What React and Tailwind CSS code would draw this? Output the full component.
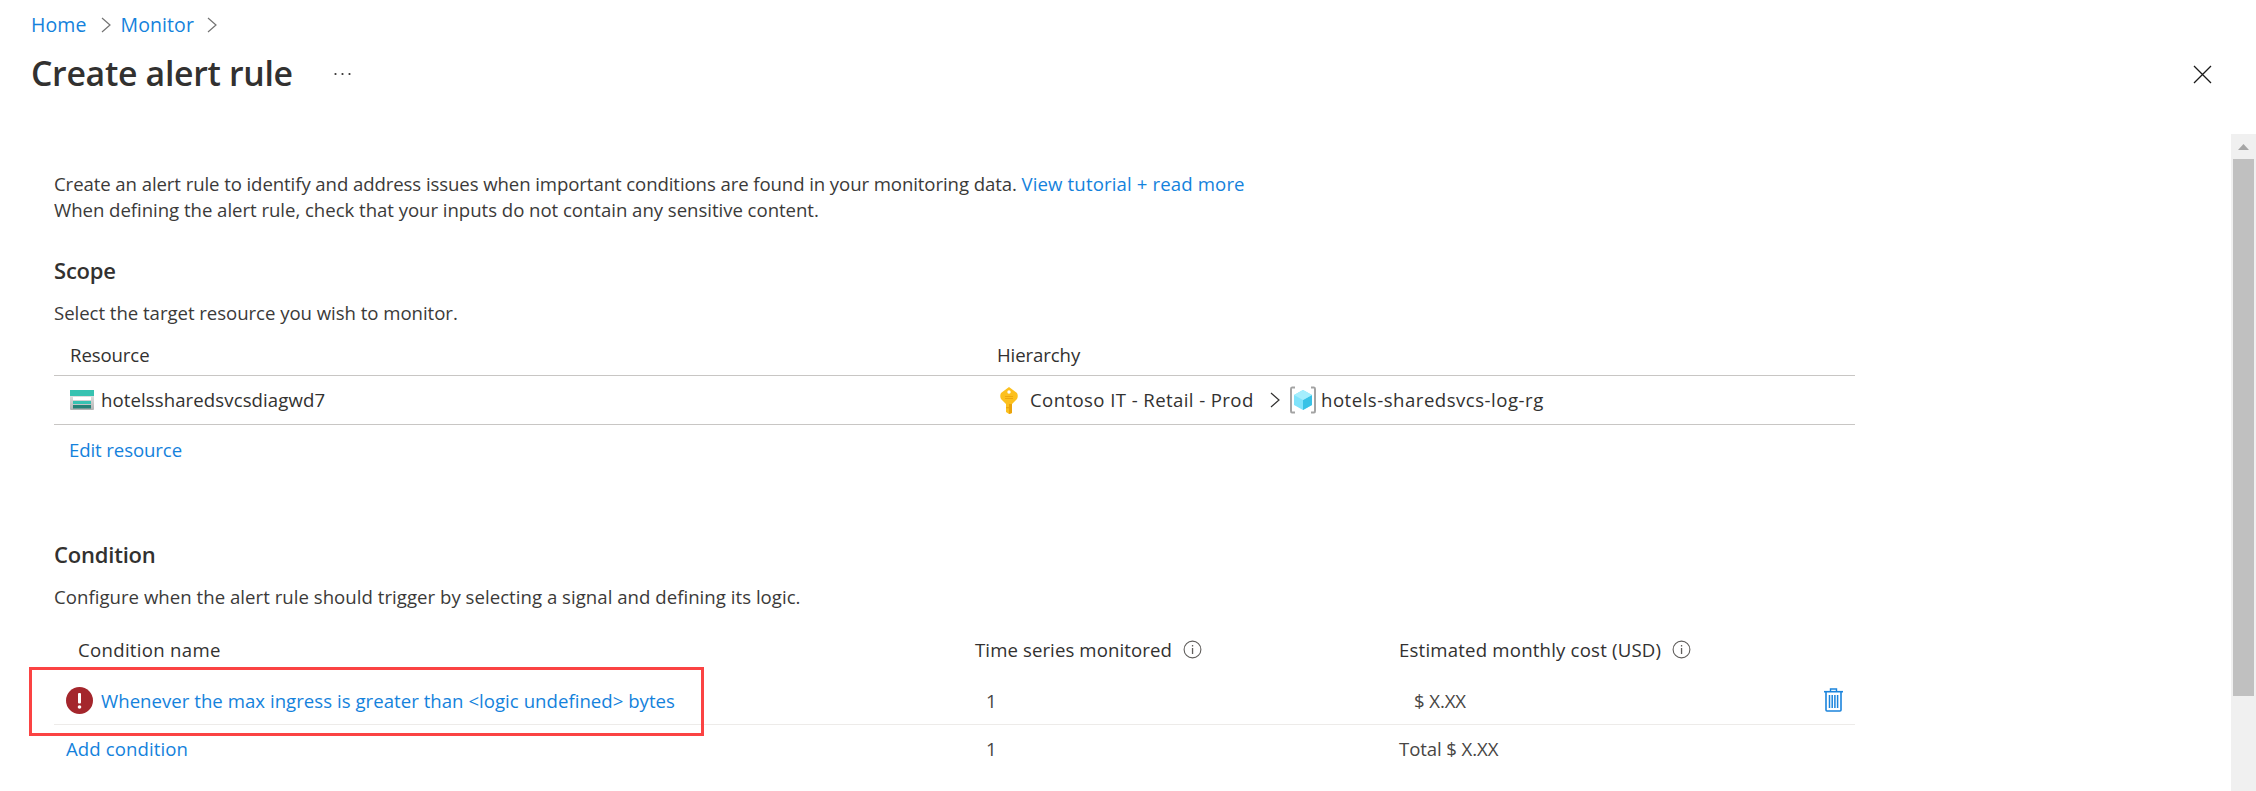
import React from "react";

const Chevron = ({ className = "", color = "#737373" }) => (
  <svg width="10" height="16" viewBox="0 0 10 16" className={className} fill="none">
    <path d="M1 1 L9 8 L1 15" stroke={color} strokeWidth="1.2" />
  </svg>
);

const Info = () => (
  <svg width="19" height="19" viewBox="0 0 19 19" fill="none">
    <circle cx="9.5" cy="9.5" r="8.4" stroke="#605e5c" strokeWidth="1.1" />
    <rect x="8.9" y="8" width="1.3" height="6" fill="#605e5c" />
    <rect x="8.9" y="5" width="1.3" height="1.5" fill="#605e5c" />
  </svg>
);

const StorageIcon = () => (
  <svg width="24" height="20" viewBox="0 0 24 20">
    <defs>
      <linearGradient id="sg" x1="0" y1="0" x2="0" y2="1">
        <stop offset="0" stopColor="#f2f2f2" />
        <stop offset="1" stopColor="#b3b3b3" />
      </linearGradient>
    </defs>
    <rect x="0" y="0" width="24" height="20" rx="1" fill="url(#sg)" />
    <rect x="0" y="0" width="24" height="6" fill="#37c2b1" />
    <rect x="3" y="7" width="18" height="3" fill="#ffffff" />
    <rect x="3" y="11" width="18" height="3" fill="#37c2b1" />
    <rect x="3" y="15" width="18" height="3.5" fill="#258277" />
  </svg>
);

const KeyIcon = () => (
  <svg width="18" height="27" viewBox="0 0 18 27">
    <path d="M9 0 L17 6 Q18.5 9 17 12 L12 17 L12 26 L9 27 L6 25 L6 17 L1 12 Q-0.5 9 1 6 Z" fill="#fcc01e" />
    <path d="M9 17 L12 17 L12 26 L9 27 Z" fill="#eaa30c" />
    <circle cx="9" cy="5" r="1.7" fill="#ffffff" />
    <rect x="5" y="9" width="8" height="1" fill="#eda70f" />
    <rect x="5" y="11" width="8" height="1" fill="#eda70f" />
    <rect x="6" y="20" width="3" height="1.3" fill="#eda70f" />
  </svg>
);

const CubeIcon = () => (
  <svg width="26" height="28" viewBox="0 0 26 28" fill="none">
    <path d="M5 1.5 H2 Q1 1.5 1 3 V25 Q1 26.5 2 26.5 H5" stroke="#a3a3a3" strokeWidth="2" />
    <path d="M21 1.5 H24 Q25 1.5 25 3 V25 Q25 26.5 24 26.5 H21" stroke="#a3a3a3" strokeWidth="2" />
    <path d="M13 4 L22 9 V19 L13 24 L4 19 V9 Z" fill="#7fe3fb" />
    <path d="M13 14 L22 9 V19 L13 24 Z" fill="#38c2e6" />
    <path d="M13 4 L22 9 L13 14 L4 9 Z" fill="#a5eefd" />
  </svg>
);

const ErrorIcon = () => (
  <svg width="27" height="27" viewBox="0 0 27 27">
    <circle cx="13.5" cy="13.5" r="13.5" fill="#a4262c" />
    <rect x="12" y="6" width="3" height="10.5" rx="1" fill="#ffffff" />
    <circle cx="13.5" cy="20" r="1.8" fill="#ffffff" />
  </svg>
);

const TrashIcon = () => (
  <svg width="19" height="24" viewBox="0 0 19 24" fill="none">
    <path d="M6.5 3 V1 H12.5 V3" stroke="#1b84dc" strokeWidth="1.4" />
    <path d="M0 3.7 H19" stroke="#1b84dc" strokeWidth="1.6" />
    <path d="M2 4 V22 Q2 23 3 23 H16 Q17 23 17 22 V4" stroke="#1b84dc" strokeWidth="1.6" />
    <path d="M5.5 7 V20 M8.2 7 V20 M10.9 7 V20 M13.6 7 V20" stroke="#1b84dc" strokeWidth="1.5" />
  </svg>
);

const link = "text-[#1482dc]";

export default function App() {
  return (
    <div className="w-[2256px] h-[791px] overflow-hidden bg-white flex flex-col font-['Open_Sans','Noto_Sans',sans-serif] text-[18.6px] tracking-[-0.1px] text-[#323130]">
      <header className="h-[134px] shrink-0 pl-[31px] pt-[12px]">
        <nav className="h-[26px] flex items-center text-[19.5px] tracking-[0.1px]">
          <span className={link}>Home</span>
          <Chevron className="ml-[14px] mr-[10px]" />
          <span className={link}>Monitor</span>
          <Chevron className="ml-[13px]" />
        </nav>
        <div className="mt-[12px] h-[48px] flex items-center">
          <h1 className="text-[33.8px] font-semibold leading-none tracking-[-0.3px] text-[#323130]">Create alert rule</h1>
          <svg width="17" height="4" viewBox="0 0 17 4" className="ml-[41px]">
            <circle cx="1.5" cy="2" r="1.1" fill="#323130" />
            <circle cx="8.5" cy="2" r="1.1" fill="#323130" />
            <circle cx="15.5" cy="2" r="1.1" fill="#323130" />
          </svg>
          <svg width="19" height="19" viewBox="0 0 19 19" className="ml-auto mr-[44px]">
            <path d="M1 1 L18 18 M18 1 L1 18" stroke="#1a1a1a" strokeWidth="1.3" />
          </svg>
        </div>
      </header>

      <div className="flex flex-1 min-h-0">
        <main className="flex-1 pl-[54px] pr-[376px] pt-[37px] min-w-0">
          <p className="leading-[26px] whitespace-nowrap text-[#3b3a39] tracking-[-0.09px]">
            Create an alert rule to identify and address issues when important conditions are found in your monitoring data.{" "}
            <span className={`${link} tracking-[0.13px]`}>View tutorial + read more</span>
          </p>
          <p className="leading-[26px] whitespace-nowrap text-[#3b3a39] tracking-[-0.035px]">
            When defining the alert rule, check that your inputs do not contain any sensitive content.
          </p>

          <h2 className="mt-[31px] h-[32px] leading-[32px] text-[22px] font-semibold tracking-[-0.2px]">Scope</h2>
          <p className="mt-[14px] leading-[26px] text-[#3b3a39] tracking-[-0.04px]">Select the target resource you wish to monitor.</p>

          <div className="mt-[9px] w-[1801px]">
            <div className="grid grid-cols-[943px_1fr] h-[41px] items-center border-b border-[#c8c6c4]">
              <div className="pl-[16px]">Resource</div>
              <div>Hierarchy</div>
            </div>
            <div className="grid grid-cols-[943px_1fr] h-[49px] items-center border-b border-[#c8c6c4]">
              <div className="pl-[16px] flex items-center gap-[7px]">
                <StorageIcon />
                <span className="tracking-[0.09px]">hotelssharedsvcsdiagwd7</span>
              </div>
              <div className="flex items-center">
                <span className="ml-[3px]"><KeyIcon /></span>
                <span className="ml-[12px] w-[222px] whitespace-nowrap tracking-[0.4px]">Contoso IT - Retail - Prod</span>
                <Chevron className="ml-[18px]" color="#323130" />
                <span className="ml-[10px]"><CubeIcon /></span>
                <span className="ml-[5px] tracking-[0.5px]">hotels-sharedsvcs-log-rg</span>
              </div>
            </div>
          </div>
          <div className={`mt-[12px] leading-[26px] pl-[15px] ${link}`}>Edit resource</div>

          <h2 className="mt-[75px] h-[32px] leading-[32px] text-[22px] font-semibold tracking-[-0.2px]">Condition</h2>
          <p className="mt-[14px] leading-[26px] text-[#3b3a39] tracking-[0.03px]">Configure when the alert rule should trigger by selecting a signal and defining its logic.</p>

          <div className="mt-[20px] w-[1801px]">
            <div className="grid grid-cols-[921px_424px_1fr] h-[40px] items-center">
              <div className="pl-[24px] tracking-[0.3px]">Condition name</div>
              <div className="flex items-center gap-[11px] tracking-[0.1px]">Time series monitored <Info /></div>
              <div className="flex items-center gap-[11px] tracking-[0.2px]">Estimated monthly cost (USD) <Info /></div>
            </div>
            <div className="relative grid grid-cols-[921px_424px_1fr] h-[55px] items-center border-b border-[#edebe9] pt-[7px]">
              <div className="pl-[12px] flex items-center gap-[8px]">
                <ErrorIcon />
                <span className={`${link} tracking-[0.03px]`}>{"Whenever the max ingress is greater than <logic undefined> bytes"}</span>
              </div>
              <div className="pl-[11px] text-[#484644]">1</div>
              <div className="pl-[15px] flex items-center justify-between pr-[12px] text-[#484644]">
                <span>$ X.XX</span>
                <TrashIcon />
              </div>
              <div className="absolute left-[-25px] top-[-3px] w-[675px] h-[69px] border-[3px] border-[#fb4343] pointer-events-none" />
            </div>
            <div className="grid grid-cols-[921px_424px_1fr] h-[48px] items-center">
              <div className={`pl-[12px] tracking-[0.1px] ${link}`}>Add condition</div>
              <div className="pl-[11px] text-[#484644]">1</div>
              <div className="text-[#484644]">Total $ X.XX</div>
            </div>
          </div>
        </main>

        <aside className="w-[25px] shrink-0 bg-[#f0f0f0] flex flex-col items-center">
          <div className="h-[25px] flex items-center justify-center">
            <svg width="11" height="6" viewBox="0 0 11 6"><path d="M5.5 0 L11 6 H0 Z" fill="#a6a6a6" /></svg>
          </div>
          <div className="w-[21px] h-[537px] bg-[#c0c0c0]" />
        </aside>
      </div>
    </div>
  );
}
